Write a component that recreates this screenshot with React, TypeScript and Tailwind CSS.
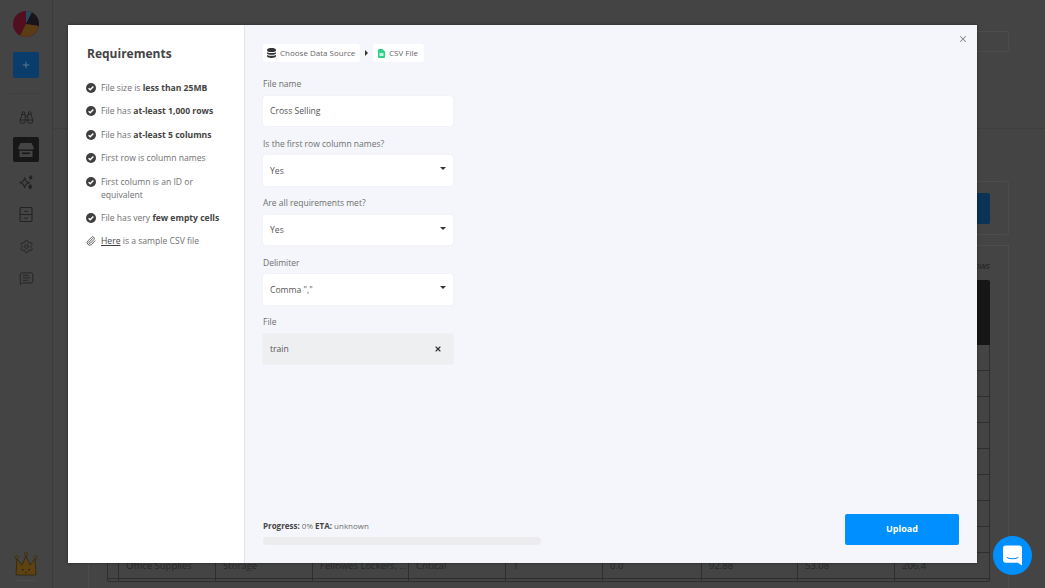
import { Binoculars, Settings, MessageSquareText, Plus, X, Paperclip } from 'lucide-react'

const font = { fontFamily: '"Open Sans", sans-serif' }

const requirements = [
  { pre: 'File size is ', bold: 'less than 25MB' },
  { pre: 'File has ', bold: 'at-least 1,000 rows' },
  { pre: 'File has ', bold: 'at-least 5 columns' },
  { pre: 'First row is column names', bold: '' },
  { pre: 'First column is an ID or equivalent', bold: '' },
  { pre: 'File has very ', bold: 'few empty cells' },
]

function CheckBadge() {
  return (
    <svg viewBox="0 0 20 20" className="w-[10px] h-[10px] mt-[1px] shrink-0">
      <circle cx="10" cy="10" r="10" fill="#3f3f3f" />
      <path d="M5.2 10.4l3.3 3.3 6.2-6.6" fill="none" stroke="#fff" strokeWidth="2.8" />
    </svg>
  )
}

function Caret() {
  return <span className="w-0 h-0 border-x-[3.5px] border-x-transparent border-t-[3.5px] border-t-[#333] mb-[3px]" />
}

function SelectField({ label, value }: { label: string; value: string }) {
  return (
    <div className="mt-[10.5px]">
      <div className="text-[8.5px] leading-[13px] text-[#6f6f6f]">{label}</div>
      <div className="mt-[5.5px] h-[30.5px] w-[190px] bg-white rounded-[2px] shadow-[0_0_1px_rgba(0,0,0,0.15)] flex items-center justify-between pl-[7px] pr-[7px] text-[8.6px] text-[#555]">
        <span className="mt-[2px]">{value}</span>
        <Caret />
      </div>
    </div>
  )
}

function Sidebar() {
  return (
    <aside className="w-[53px] shrink-0 h-full border-r border-[#3c3c3c] flex flex-col items-center">
      <svg viewBox="0 0 26 26" className="w-[26px] h-[26px] mt-[11px]">
        <circle cx="13" cy="13" r="13" fill="#520f20" />
        <path d="M13 13 L13 0 A13 13 0 0 1 19 1.5 Z" fill="#274a5e" />
        <path d="M13 13 L19 1.5 A13 13 0 0 1 25.8 15 Z" fill="#17141a" />
        <path d="M13 13 L25.8 15 A13 13 0 0 1 7 24.5 Z" fill="#5a3d14" />
      </svg>
      <div className="mt-[15px] w-[26px] h-[26px] rounded-[2px] bg-[#0a3d6b] flex items-center justify-center">
        <Plus className="w-[10px] h-[10px] text-[#6b8296]" />
      </div>
      <div className="mt-[15px] w-[32px] h-px bg-[#3e3e3e]" />
      <Binoculars className="mt-[16px] w-[15px] h-[15px] text-[#222]" strokeWidth={1.5} />
      <div className="mt-[12px] w-[26px] h-[25px] rounded-[2px] bg-[#171717] flex items-center justify-center">
        <svg viewBox="0 0 16 14" className="w-[16px] h-[14px]">
          <path d="M2.5 0h11L16 5a2 2 0 0 1-2 1.6H2A2 2 0 0 1 0 5z" fill="#444" />
          <path d="M1.5 7.8h13V14h-13z" fill="#444" />
          <path d="M4 9.5h8v1.6H4z" fill="#171717" />
        </svg>
      </div>
      <svg viewBox="0 0 16 16" className="mt-[13px] w-[15px] h-[15px]" fill="none" stroke="#222" strokeWidth="1.1">
        <path d="M6 3.2l1.5 3.4L11 8.2 7.5 9.8 6 13.2 4.5 9.8 1 8.2l3.5-1.6z" />
        <path d="M12.5 0.8l1.3 1.9-1.3 1.9-1.3-1.9z" fill="#222" />
        <path d="M12 10.5l1.6 2.1-1.6 2.1-1.6-2.1z" fill="#222" />
      </svg>
      <svg viewBox="0 0 14 16" className="mt-[17px] w-[14px] h-[15px]" fill="none" stroke="#222" strokeWidth="1.1">
        <rect x="0.6" y="0.6" width="12.8" height="14.8" rx="1" />
        <path d="M0.6 8h12.8M5 4.2c.5.8 3.5.8 4 0M5 11.4c.5.8 3.5.8 4 0" />
      </svg>
      <Settings className="mt-[17px] w-[15px] h-[15px] text-[#222]" strokeWidth={1.4} />
      <MessageSquareText className="mt-[17px] w-[15px] h-[15px] text-[#222]" strokeWidth={1.4} />
      <svg viewBox="0 0 24 30" className="mt-auto mb-[6px] w-[24px] h-[30px]">
        <path d="M3 7l5 6 4-9 4 9 5-6 1 16H2z" fill="#5e4311" stroke="#2f2610" strokeWidth="0.8" />
        <circle cx="2.5" cy="5.5" r="1.6" fill="#5e4311" stroke="#2f2610" strokeWidth="0.5" />
        <circle cx="12" cy="2" r="1.6" fill="#5e4311" stroke="#2f2610" strokeWidth="0.5" />
        <circle cx="21.5" cy="5.5" r="1.6" fill="#5e4311" stroke="#2f2610" strokeWidth="0.5" />
        <path d="M8 17h1.6v1.4H8zM14.4 17H16v1.4h-1.6zM11 20h2v.8h-2z" fill="#222" />
        <path d="M3 28.5h18" stroke="#4e4e4e" strokeWidth="1" />
      </svg>
    </aside>
  )
}

function PageBehind() {
  const columns = ['w-[10px]', 'w-[97px]', 'w-[97px]', 'w-[96px]', 'w-[97px]', 'w-[97px]', 'w-[99px]', 'w-[96px]', 'w-[97px]', 'flex-1']
  const lastRow = ['', 'Office Supplies', 'Storage', 'Fellowes Lockers, ...', 'Critical', '1', '0.0', '92.88', '53.08', '206.4']
  return (
    <main className="flex-1 h-full flex flex-col min-w-0">
      <div className="h-[129px] shrink-0 border-b border-[#3e3e3e] flex justify-end pr-[36px] pt-[31px]">
        <div className="w-[300px] h-[21px] rounded-[2px] border border-[#4c4c4c]" />
      </div>
      <div className="flex-1 pl-[35px] pr-[36px] pt-[52px] flex flex-col">
        <div className="h-[54px] rounded-[2px] border border-[#4c4c4c] flex justify-end items-center pr-[18px]">
          <div className="w-[110px] h-[31px] rounded-[2px] bg-[#0a3355]" />
        </div>
        <div className="mt-[10px] flex-1 border-l border-r border-t border-[#4c4c4c] pl-[18px] pr-[18px] pt-[13px]">
          <div className="text-[9px] leading-[13px] italic text-[#222] text-right">Showing 9 rows</div>
          <div className="mt-[8px] h-[65px] rounded-t-[2px] bg-[#161616]" />
          <div className="border-x border-b border-[#2e2e2e] rounded-b-[3px] h-[237px] overflow-hidden">
            {[0, 1, 2, 3, 4, 5, 6, 7, 8, 9].map((row) => (
              <div key={row} className={`flex ${row === 9 ? 'h-[3px]' : 'h-[26px] border-b border-[#2e2e2e]'} text-[9.5px] text-[#282828]`}>
                {columns.map((w, i) => (
                  <div key={i} className={`${w} ${i > 0 ? 'border-l border-[#2e2e2e] pl-[7px]' : ''} leading-[25px] whitespace-nowrap overflow-hidden`}>
                    {row === 8 ? lastRow[i] : ''}
                  </div>
                ))}
              </div>
            ))}
          </div>
        </div>
      </div>
    </main>
  )
}

function UploadModal() {
  return (
    <div className="fixed inset-0 flex items-start justify-center pt-[25px]">
      <div className="w-[909px] h-[538px] flex relative shadow-[0_0_3px_rgba(0,0,0,0.4)]">
        {/* Requirements */}
        <div className="w-[177px] shrink-0 bg-white border-r border-[#e4e4e4] pl-[18px] pr-[14px]">
          <h2 className="mt-[20px] ml-[1px] text-[12px] leading-[18px] font-bold text-[#444]">Requirements</h2>
          <ul className="mt-[19px] text-[8.6px] leading-[13px] text-[#6f6f6f] flex flex-col gap-[10.4px]">
            {requirements.map((item) => (
              <li key={item.pre + item.bold} className="flex gap-[5px]">
                <CheckBadge />
                <span className={item.bold ? '' : 'max-w-[105px]'}>
                  {item.pre}
                  {item.bold && <b className="text-[#444]">{item.bold}</b>}
                </span>
              </li>
            ))}
            <li className="flex gap-[5px]">
              <Paperclip className="w-[10px] h-[10px] mt-[1px] shrink-0 text-[#444]" />
              <span>
                <span className="underline text-[#444]">Here</span> is a sample CSV file
              </span>
            </li>
          </ul>
        </div>

        {/* Form */}
        <div className="flex-1 bg-[#f4f6fb] pl-[18px] pr-[18px] relative flex flex-col">
          <X className="absolute top-[9px] right-[9px] w-[10px] h-[10px] text-[#888]" strokeWidth={2.5} />
          <div className="mt-[19px] flex items-center text-[8px] text-[#666]">
            <div className="h-[18px] w-[97px] bg-white rounded-[3px] flex items-center pl-[4px] gap-[4px]">
              <svg viewBox="0 0 16 18" className="w-[9px] h-[10px]" fill="#333">
                <path d="M0 3c0-4 16-4 16 0v2c0 3-16 3-16 0zM0 7.5c3 2 13 2 16 0V10c0 3-16 3-16 0zM0 12.5c3 2 13 2 16 0V15c0 4-16 4-16 0z" />
              </svg>
              Choose Data Source
            </div>
            <span className="mx-[5px] w-0 h-0 border-y-[3px] border-y-transparent border-l-[3px] border-l-[#333]" />
            <div className="h-[18px] w-[51px] bg-white rounded-[3px] flex items-center pl-[5px] gap-[4px]">
              <svg viewBox="0 0 14 18" className="w-[7px] h-[9px]">
                <path d="M0 2a2 2 0 0 1 2-2h7l5 5v11a2 2 0 0 1-2 2H2a2 2 0 0 1-2-2z" fill="#2fd08a" />
                <path d="M3 8h8v6H3z" fill="#c8f3df" />
              </svg>
              CSV File
            </div>
          </div>
          <div className="mt-[15px] text-[8.5px] leading-[13px] text-[#6f6f6f]">File name</div>
          <div className="mt-[5.5px] h-[30.5px] w-[190px] bg-white rounded-[2px] shadow-[0_0_1px_rgba(0,0,0,0.15)] flex items-center pl-[7px] text-[8.6px] text-[#555]">
            <span className="mt-[2px]">Cross Selling</span>
          </div>
          <SelectField label="Is the first row column names?" value="Yes" />
          <SelectField label="Are all requirements met?" value="Yes" />
          <SelectField label="Delimiter" value={'Comma ","'} />
          <div className="mt-[10.5px] text-[8.5px] leading-[13px] text-[#6f6f6f]">File</div>
          <div className="mt-[5.5px] h-[30.5px] w-[190px] bg-[#eeeff1] rounded-[1px] shadow-[0_0_1px_rgba(0,0,0,0.2)] flex items-center justify-between pl-[7px] pr-[11px] text-[8.6px] text-[#555]">
            <span className="mt-[2px]">train</span>
            <X className="w-[8px] h-[8px] text-[#333]" strokeWidth={3.5} />
          </div>
          <div className="mt-auto mb-[18px] flex items-end justify-between">
            <div className="w-[278px]">
              <div className="text-[8px] leading-[12px] text-[#6f6f6f]">
                <b className="text-[#444]">Progress:</b> 0% <b className="text-[#444]">ETA:</b> unknown
              </div>
              <div className="mt-[5px] h-[8px] rounded-full bg-[#ececee]" />
            </div>
            <button className="w-[114px] h-[31px] rounded-[2px] bg-[#008fff] text-white text-[9px] font-bold pb-[1px]">
              Upload
            </button>
          </div>
        </div>
      </div>
    </div>
  )
}

export default function App() {
  return (
    <div className="h-screen w-full bg-[#444444] flex overflow-hidden relative" style={font}>
      <Sidebar />
      <PageBehind />
      <UploadModal />
      {/* chat launcher */}
      <div className="fixed right-[13px] bottom-[13px] w-[39px] h-[39px] rounded-full bg-[#008fff] flex items-center justify-center">
        <svg viewBox="0 0 20 21" className="w-[19px] h-[21px]">
          <path d="M3 0h14a3 3 0 0 1 3 3v18l-4.5-3H3a3 3 0 0 1-3-3V3a3 3 0 0 1 3-3z" fill="#fff" />
          <path d="M4 12.5c3 2 9 2 12 0" fill="none" stroke="#008fff" strokeWidth="1.1" />
        </svg>
      </div>
    </div>
  )
}
